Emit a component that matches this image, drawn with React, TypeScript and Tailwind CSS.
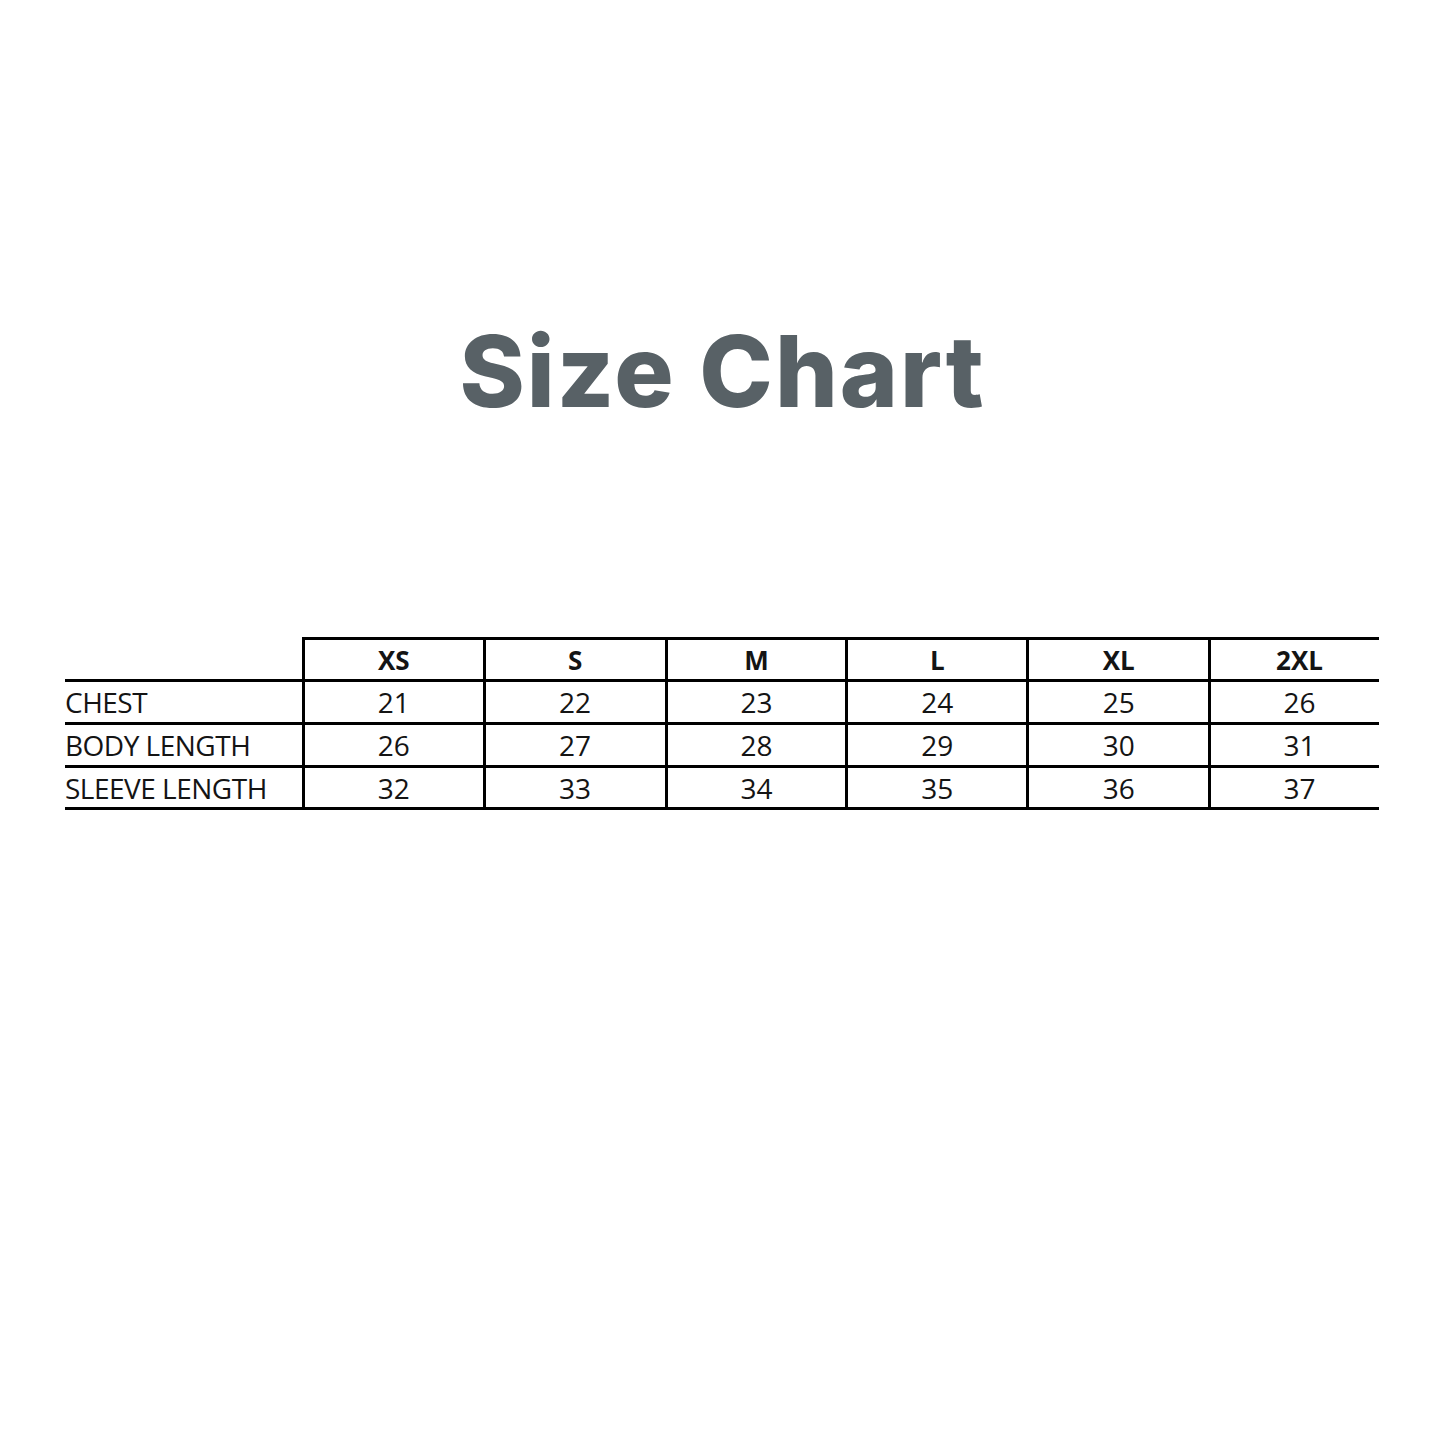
import React from "react";

const sizes = ["XS", "S", "M", "L", "XL", "2XL"];
const widths = ["w-[181px]", "w-[182px]", "w-[181px]", "w-[181px]", "w-[182px]", "w-[171px] pl-[9px]"];
const rows: { label: string; values: string[]; h: string }[] = [
  { label: "CHEST", values: ["21", "22", "23", "24", "25", "26"], h: "h-[43px]" },
  { label: "BODY LENGTH", values: ["26", "27", "28", "29", "30", "31"], h: "h-[43px]" },
  { label: "SLEEVE LENGTH", values: ["32", "33", "34", "35", "36", "37"], h: "h-[42px]" },
];

export default function App() {
  return (
    <div className="w-[1445px] h-[1445px] bg-white flex flex-col pt-[321px]">
      <h1
        className="h-[100px] leading-[100px] text-center text-[99px] font-extrabold text-[#586166] tracking-[2px]"
        style={{ fontFamily: "Inter, 'Noto Sans', sans-serif" }}
      >
        Size Chart
      </h1>
      <div
        className="mt-[216px] ml-[65px] w-[1314px] flex flex-col text-[#141414] text-[28px]"
        style={{ fontFamily: "'Open Sans', 'Noto Sans', sans-serif" }}
      >
        <div className="flex border-b-[3px] border-black box-border">
          <div className="w-[237px]" />
          {sizes.map((s, i) => (
            <div
              key={s}
              className={`${widths[i]} h-[42px] border-t-[3px] border-l-[3px] border-black flex items-center justify-center font-bold text-[26px] leading-none`}
            >
              {s}
            </div>
          ))}
        </div>
        {rows.map((r) => (
          <div key={r.label} className={`flex ${r.h} border-b-[3px] border-black box-border`}>
            <div className="w-[237px] flex items-center leading-none font-medium tracking-[-0.5px]">{r.label}</div>
            {r.values.map((v, i) => (
              <div
                key={i}
                className={`${widths[i]} border-l-[3px] border-black flex items-center justify-center leading-none font-medium`}
              >
                {v}
              </div>
            ))}
          </div>
        ))}
      </div>
    </div>
  );
}
